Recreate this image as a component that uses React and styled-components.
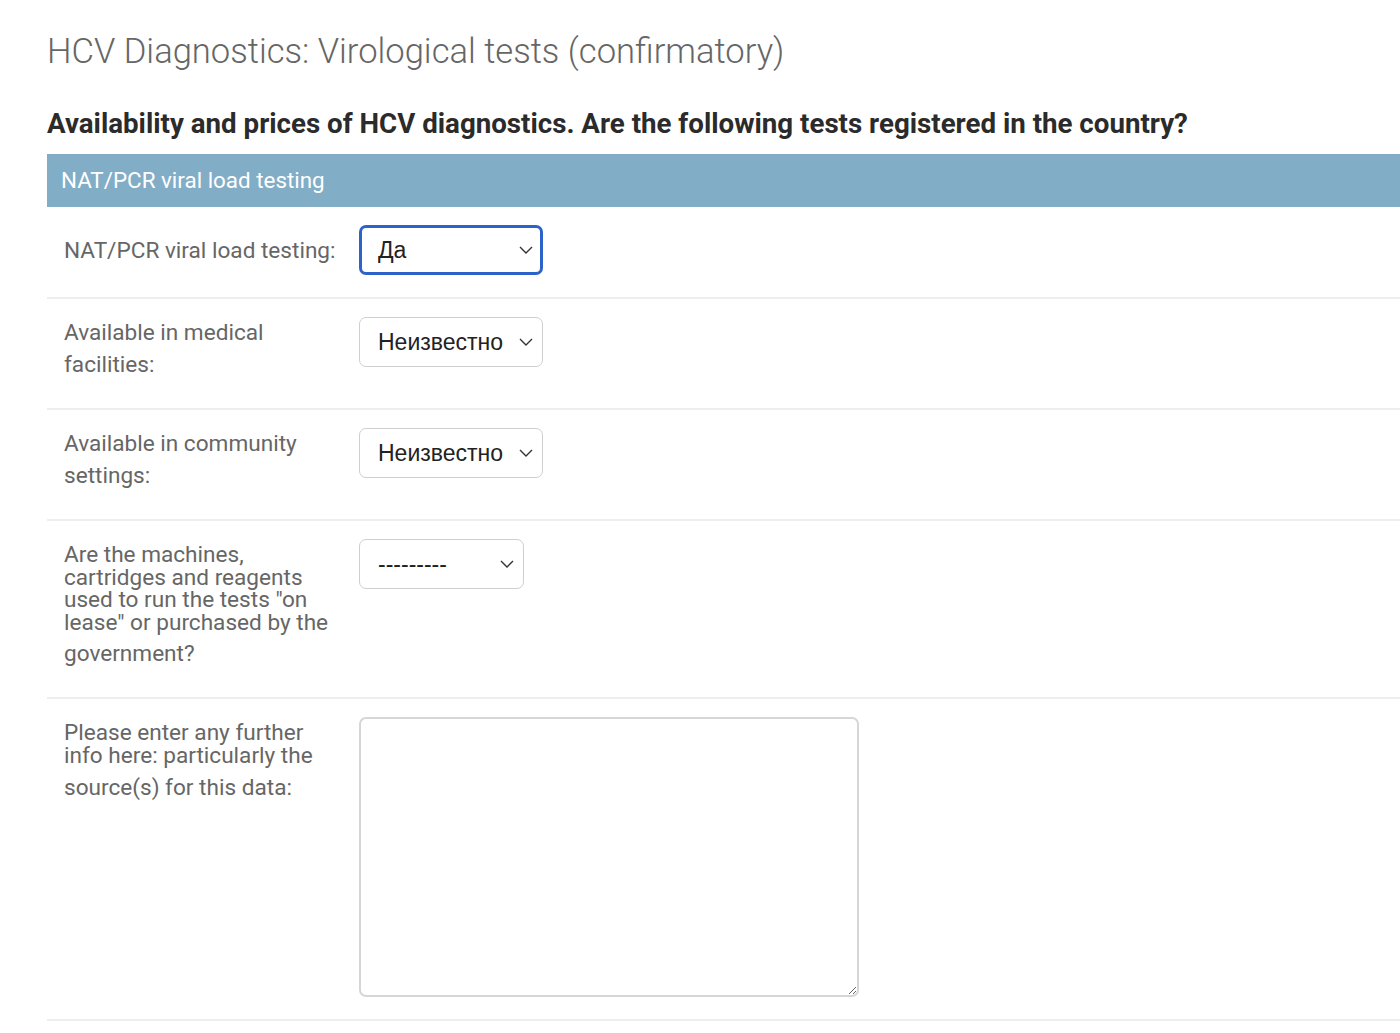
import React from "react";
import styled, { createGlobalStyle } from "styled-components";

const GlobalStyle = createGlobalStyle`
  html, body {
    margin: 0;
    padding: 0;
    background: #fff;
  }
  body {
    font-family: Roboto, "Liberation Sans", Arial, sans-serif;
    color: #333;
  }
`;

const Page = styled.div`
  padding: 0 0 0 47px;
  overflow: hidden;
`;

const Title = styled.h1`
  margin: 0;
  padding-top: 29px;
  font-weight: 300;
  font-size: 34.6px;
  line-height: 44px;
  color: #666;
`;

const SubTitle = styled.h2`
  margin: 0;
  padding-top: 35px;
  padding-bottom: 14px;
  font-weight: 700;
  font-size: 27.7px;
  line-height: 32px;
  color: #2b2b2b;
`;

const Module = styled.fieldset`
  margin: 0;
  padding: 0;
  border: 0;
  min-width: 0;
`;

const Caption = styled.div`
  height: 53px;
  line-height: 53px;
  padding-left: 14px;
  background: #82adc7;
  color: #fff;
  font-size: 22.4px;
  font-weight: 400;
`;

const Row = styled.div`
  display: flex;
  align-items: ${(p) => (p.$center ? "center" : "flex-start")};
  padding: 18px 17px 22px;
  border-bottom: 2px solid #eee;
`;

const Label = styled.label`
  flex: 0 0 272px;
  margin-right: 23px;
  padding-top: ${(p) => (p.$center ? "2px" : "0")};
  padding-bottom: ${(p) => (p.$center ? "0" : "5px")};
  font-size: 22.6px;
  line-height: 32px;
  color: #666;
`;

const Tight = styled.span`
  display: block;
  line-height: 22.6px;
  padding-top: 5px;
  padding-bottom: 4px;
`;

const SelectWrap = styled.div`
  position: relative;
  width: ${(p) => p.$width}px;
  height: 50px;
`;

const Select = styled.select`
  appearance: none;
  -webkit-appearance: none;
  box-sizing: border-box;
  width: 100%;
  height: 100%;
  margin: 0;
  padding: 0 36px 0 ${(p) => (p.$focused ? "16px" : "18px")};
  border: ${(p) => (p.$focused ? "3px solid #2d62c8" : "1.5px solid #cfcfcf")};
  border-radius: 7px;
  background: #fff;
  font-family: "Liberation Sans", Arial, sans-serif;
  font-size: 23px;
  color: #222;
  outline: none;
`;

const Chevron = styled.svg`
  position: absolute;
  right: 10px;
  top: 20px;
  width: 14px;
  height: 10px;
  pointer-events: none;
`;

const TextArea = styled.textarea`
  box-sizing: border-box;
  width: 500px;
  height: 280px;
  margin: 0;
  padding: 8px;
  border: 2px solid #d6d6d6;
  border-radius: 7px;
  font-family: Roboto, sans-serif;
  font-size: 20px;
  outline: none;
`;

const Dropdown = ({ value, width, focused, options }) => (
  <SelectWrap $width={width}>
    <Select $focused={focused} defaultValue={value}>
      {options.map((o) => (
        <option key={o}>{o}</option>
      ))}
    </Select>
    <Chevron viewBox="0 0 14 10">
      <path d="M1 2 L7 8 L13 2" fill="none" stroke="#333" strokeWidth="1.4" />
    </Chevron>
  </SelectWrap>
);

const yesNo = ["Да", "Нет", "Неизвестно"];

export default function App() {
  return (
    <Page>
      <GlobalStyle />
      <Title>HCV Diagnostics: Virological tests (confirmatory)</Title>
      <SubTitle>
        Availability and prices of HCV diagnostics. Are the following tests registered in the country?
      </SubTitle>
      <Module>
        <Caption>NAT/PCR viral load testing</Caption>
        <Row $center>
          <Label $center>NAT/PCR viral load testing:</Label>
          <Dropdown value="Да" width={184} focused options={yesNo} />
        </Row>
        <Row>
          <Label>Available in medical facilities:</Label>
          <Dropdown value="Неизвестно" width={184} options={yesNo} />
        </Row>
        <Row>
          <Label>Available in community settings:</Label>
          <Dropdown value="Неизвестно" width={184} options={yesNo} />
        </Row>
        <Row>
          <Label>
            <Tight>
              Are the machines, cartridges and reagents used to run the tests "on lease" or purchased by the
            </Tight>
            government?
          </Label>
          <Dropdown value="---------" width={165} options={["---------", "On lease", "Purchased"]} />
        </Row>
        <Row>
          <Label>
            <Tight>Please enter any further info here: particularly the</Tight>
            source(s) for this data:
          </Label>
          <TextArea />
        </Row>
      </Module>
    </Page>
  );
}
